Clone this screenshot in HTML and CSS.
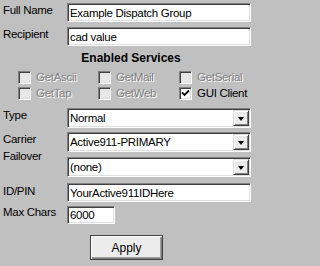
FILE: index.html
```html
<!DOCTYPE html>
<html>
<head>
<meta charset="utf-8">
<link rel="stylesheet" href="styles.css">
</head>
<body>
<div class="form">
  <div class="row r-full">
    <label class="lbl">Full Name</label>
    <input class="field wide" type="text" value="Example Dispatch Group">
  </div>
  <div class="row r-recip">
    <label class="lbl">Recipient</label>
    <input class="field wide" type="text" value="cad value">
  </div>
  <div class="heading">Enabled Services</div>
  <div class="services">
    <div class="svc disabled"><span class="box"></span><span class="svc-text">GetAscii</span></div>
    <div class="svc disabled"><span class="box"></span><span class="svc-text">GetMail</span></div>
    <div class="svc disabled"><span class="box"></span><span class="svc-text">GetSerial</span></div>
    <div class="svc disabled"><span class="box"></span><span class="svc-text">GetTap</span></div>
    <div class="svc disabled"><span class="box"></span><span class="svc-text">GetWeb</span></div>
    <div class="svc"><span class="box checked"><svg width="9" height="9" viewBox="0 0 9 9"><path d="M1 3.5 L3.5 6 L8 1.5" fill="none" stroke="#000" stroke-width="1.8"/></svg></span><span class="svc-text">GUI Client</span></div>
  </div>
  <div class="row r-type">
    <label class="lbl">Type</label>
    <div class="field combo"><span class="combo-text">Normal</span><span class="drop"><span class="arrow"></span></span></div>
  </div>
  <div class="row r-carrier">
    <label class="lbl">Carrier</label>
    <div class="field combo"><span class="combo-text">Active911-PRIMARY</span><span class="drop"><span class="arrow"></span></span></div>
  </div>
  <div class="row r-failover">
    <label class="lbl lbl-up">Failover</label>
    <div class="field combo"><span class="combo-text">(none)</span><span class="drop"><span class="arrow"></span></span></div>
  </div>
  <div class="row r-id">
    <label class="lbl lbl-low">ID/PIN</label>
    <input class="field wide" type="text" value="YourActive911IDHere">
  </div>
  <div class="row r-max">
    <label class="lbl lbl-top">Max Chars</label>
    <input class="field short" type="text" value="6000">
  </div>
  <div class="actions">
    <button class="apply" type="button">Apply</button>
  </div>
</div>
</body>
</html>
```
FILE: styles.css
```css
html, body {
  margin: 0;
  padding: 0;
  background: #c0c0c0;
}
body {
  width: 257px;
  height: 266px;
  overflow: hidden;
  font-family: "Liberation Sans", Arial, sans-serif;
  font-size: 11.5px;
  letter-spacing: -0.3px;
  color: #000;
}
.form {
  display: flex;
  flex-direction: column;
  padding: 3px 0 0 3px;
}
.row {
  display: flex;
  align-items: flex-start;
}
.lbl {
  width: 64px;
  flex: none;
  line-height: 13px;
  padding-top: 1px;
}
.lbl-up { margin-top: -7px; padding-top: 0; }
.lbl-low { padding-top: 2px; }
.lbl-top { padding-top: 0; }
.field {
  box-sizing: border-box;
  height: 19px;
  margin: 0;
  padding: 0 2px;
  border: 1px solid;
  border-color: #808080 #ffffff #ffffff #808080;
  box-shadow: inset 1px 1px 0 #404040, inset -1px -1px 0 #dfdfdf;
  background: #fff;
  font: inherit;
  letter-spacing: inherit;
  color: #000;
  outline: none;
  border-radius: 0;
}
.wide { width: 184px; }
.short { width: 48px; height: 18px; }
.r-recip { margin-top: 5px; }
.heading {
  margin-top: 5px;
  font-weight: bold;
  font-size: 12px;
  letter-spacing: 0;
  line-height: 14px;
  text-align: center;
  padding-left: 2px;
}
.services {
  margin-top: 4px;
  padding-left: 15px;
  display: grid;
  grid-template-columns: 80px 81px auto;
  grid-auto-rows: 16px;
}
.svc {
  display: flex;
  align-items: center;
  gap: 5px;
}
.box {
  box-sizing: border-box;
  width: 13px;
  height: 13px;
  flex: none;
  border: 1px solid;
  border-color: #808080 #ffffff #ffffff #808080;
  box-shadow: inset 1px 1px 0 #404040, inset -1px -1px 0 #dfdfdf;
  background: #fff;
  display: flex;
  align-items: center;
  justify-content: center;
}
.disabled .box { background: #e6e6e6; }
.disabled .svc-text {
  color: #808080;
  text-shadow: 1px 1px 0 #ffffff;
}
.svc-text { line-height: 13px; }
.combo {
  width: 184px;
  height: 20px;
  display: flex;
  align-items: center;
  justify-content: space-between;
  padding: 1px 1px 1px 2px;
}
.combo-text { line-height: 13px; padding-top: 1px; }
.drop {
  box-sizing: border-box;
  width: 16px;
  height: 16px;
  flex: none;
  background: #ececec;
  border: 1px solid;
  border-color: #dfdfdf #404040 #404040 #dfdfdf;
  box-shadow: inset 1px 1px 0 #ffffff, inset -1px -1px 0 #808080;
  display: flex;
  align-items: center;
  justify-content: center;
}
.arrow {
  width: 0;
  height: 0;
  border-left: 3.5px solid transparent;
  border-right: 3.5px solid transparent;
  border-top: 4px solid #000;
  margin-top: 1px;
}
.r-type { margin-top: 7px; }
.r-carrier { margin-top: 4px; }
.r-failover { margin-top: 5px; }
.r-id { margin-top: 6px; }
.r-max { margin-top: 4px; }
.actions {
  margin-top: 11px;
  padding-left: 87px;
  display: flex;
}
.apply {
  box-sizing: border-box;
  width: 73px;
  height: 25px;
  margin: 0;
  padding: 0;
  background: #ececec;
  border: 1px solid #404040;
  box-shadow: inset 1px 1px 0 #ffffff, inset -1px -1px 0 #808080, inset -2px -2px 0 #a0a0a0;
  font: inherit;
  font-size: 12px;
  letter-spacing: 0;
  color: #000;
  border-radius: 0;
}
```
